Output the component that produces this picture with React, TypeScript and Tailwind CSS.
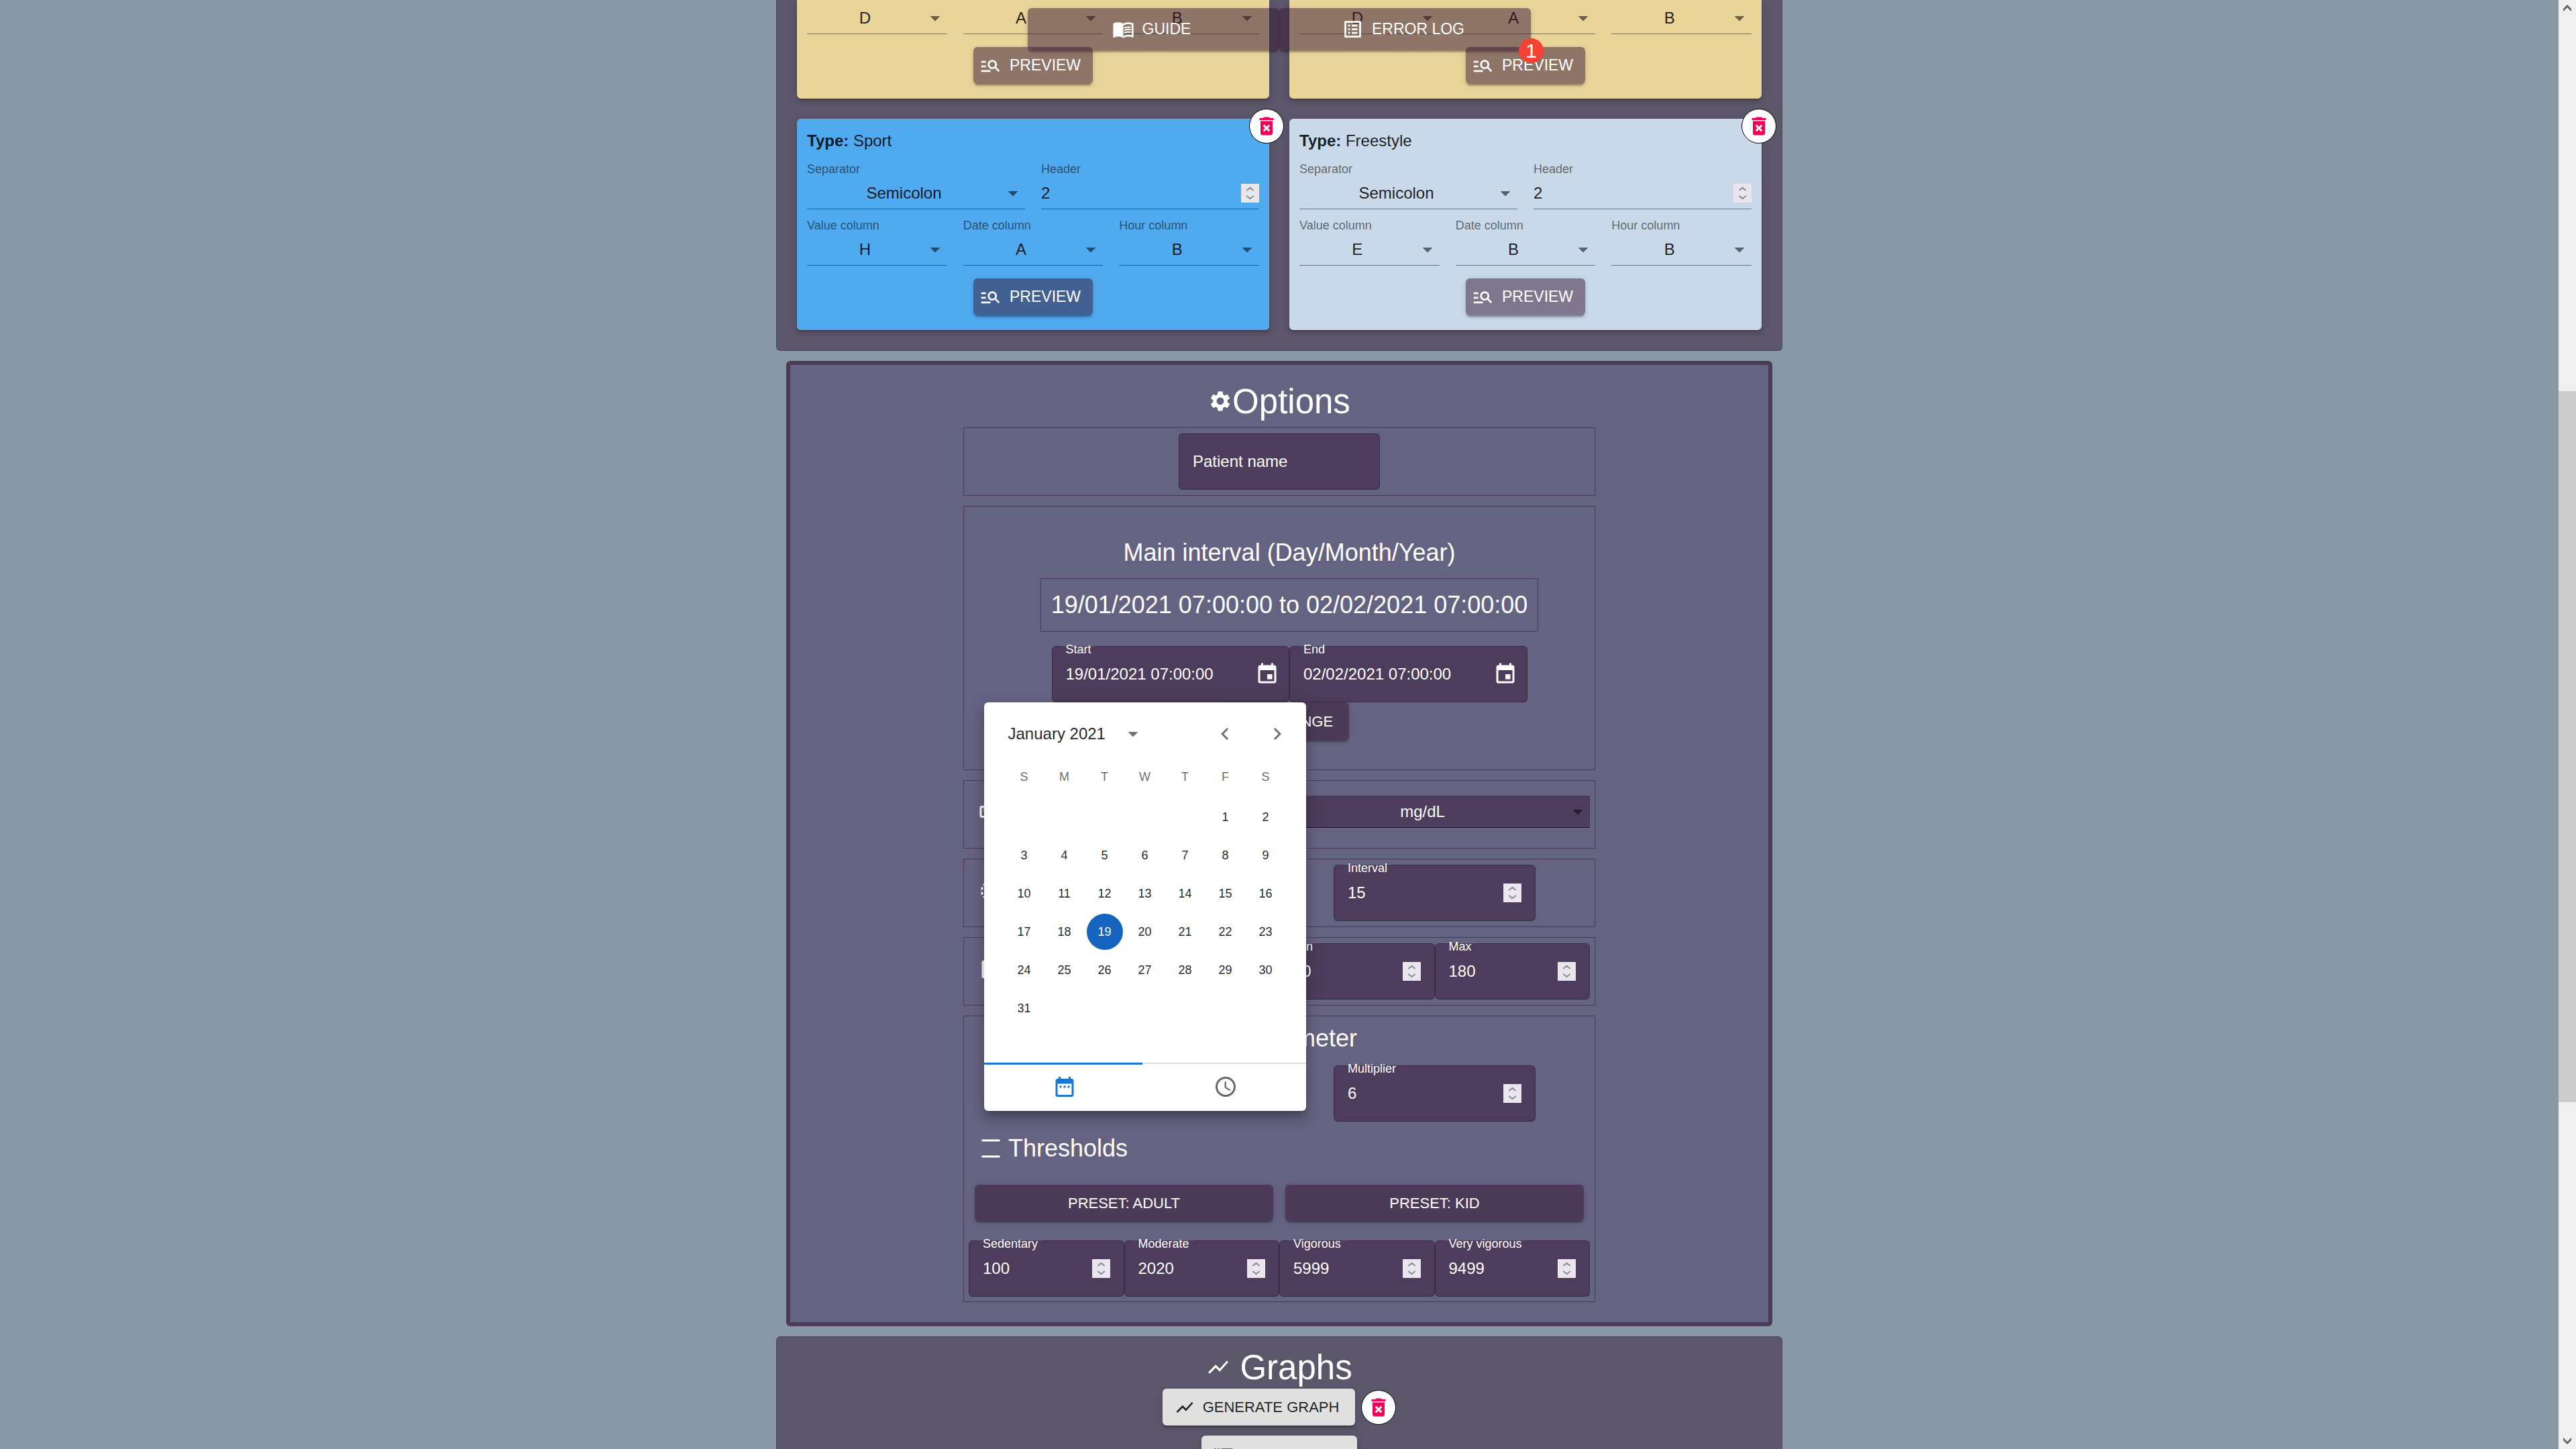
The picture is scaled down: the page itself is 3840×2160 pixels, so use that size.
import { useId, type ReactNode } from "react";
import {
  MdArrowDropDown,
  MdBurstMode,
  MdChevronLeft,
  MdChevronRight,
  MdDateRange,
  MdDeleteForever,
  MdEvent,
  MdHistoryToggleOff,
  MdListAlt,
  MdManageSearch,
  MdMenuBook,
  MdSchedule,
  MdSettings,
  MdShowChart,
  MdStraighten,
} from "react-icons/md";

const RAISED =
  "shadow-[0_5px_2px_-3px_rgba(0,0,0,0.2),0_3px_3px_0_rgba(0,0,0,0.14),0_2px_8px_0_rgba(0,0,0,0.12)]";

/* ---------- shared controls ---------- */

function Spinner({ label }: { label: string }) {
  return (
    <span className="flex h-7 w-[27px] shrink-0 flex-col bg-[#e9e7ed] text-[#8f8f9d]">
      <button type="button" aria-label={`Increase ${label}`} className="flex flex-1 items-end justify-center pb-[3px]">
        <svg width="13" height="7" viewBox="0 0 13 7" fill="none" stroke="currentColor" strokeWidth="2.2" strokeLinecap="round">
          <path d="M2 5.5 6.5 2 11 5.5" />
        </svg>
      </button>
      <button type="button" aria-label={`Decrease ${label}`} className="flex flex-1 items-start justify-center pt-[3px]">
        <svg width="13" height="7" viewBox="0 0 13 7" fill="none" stroke="currentColor" strokeWidth="2.2" strokeLinecap="round">
          <path d="M2 1.5 6.5 5 11 1.5" />
        </svg>
      </button>
    </span>
  );
}

function LineSelect({ id, label, value, options, dark }: { id?: string; label?: string; value: string; options: string[]; dark?: boolean }) {
  return (
    <div
      className={
        dark
          ? "relative border-b border-black/60 bg-[rgba(53,22,52,0.5)] text-white"
          : "relative border-b border-black/45 text-black/87"
      }
    >
      <select
        id={id}
        aria-label={label}
        defaultValue={value}
        className="block h-[47px] w-full appearance-none bg-transparent pr-9 pt-px text-2xl leading-[28px] [text-align-last:center]"
      >
        {options.map((o) => (
          <option key={o} value={o}>
            {o}
          </option>
        ))}
      </select>
      <MdArrowDropDown className="pointer-events-none absolute top-[6px] right-0 size-9 text-black/55" />
    </div>
  );
}

const COLUMNS = ["A", "B", "C", "D", "E", "F", "G", "H"];

function CardField({ label, children }: { label: string; children: (id: string) => ReactNode }) {
  const id = useId();
  return (
    <div className="min-w-0 flex-1">
      <label htmlFor={id} className="block text-lg leading-6 text-black/55">
        {label}
      </label>
      {children(id)}
    </div>
  );
}

function PreviewButton() {
  return (
    <button
      type="button"
      className={`mx-auto mt-[19px] flex h-[55px] w-[178px] items-center gap-3 rounded-md bg-[rgba(53,22,52,0.5)] pl-[9px] text-[23px] text-white ${RAISED}`}
    >
      <MdManageSearch className="size-[33px]" />
      PREVIEW
    </button>
  );
}

function DeleteButton({ label }: { label: string }) {
  return (
    <button
      type="button"
      aria-label={label}
      className="flex size-[52px] shrink-0 items-center justify-center rounded-full border border-black bg-white text-[#f50057]"
    >
      <MdDeleteForever className="size-9" />
    </button>
  );
}

const CARD_SHADOW =
  "shadow-[0_3px_2px_-2px_rgba(0,0,0,0.2),0_4px_5px_0_rgba(0,0,0,0.14),0_2px_12px_0_rgba(0,0,0,0.12)]";

function SensorCard({ type, color, columns }: { type: string; color: string; columns: [string, string, string] }) {
  return (
    <article className={`relative rounded-md px-[15px] pt-[15px] pb-[22px] ${color} ${CARD_SHADOW}`}>
      <div className="absolute -top-[15px] -right-[22px]">
        <DeleteButton label={`Delete ${type}`} />
      </div>
      <p className="text-2xl leading-9 text-black/87">
        <b>Type:</b> {type}
      </p>
      <div className="mt-3 flex gap-6">
        <CardField label="Separator">
          {(id) => <LineSelect id={id} value="Semicolon" options={["Semicolon", "Comma", "Tab"]} />}
        </CardField>
        <CardField label="Header">
          {(id) => (
            <div className="flex h-12 items-center border-b border-black/45 pt-px">
              <input
                id={id}
                type="number"
                defaultValue={2}
                className="min-w-0 flex-1 [appearance:textfield] bg-transparent text-2xl leading-[28px] text-black/87 [&::-webkit-inner-spin-button]:appearance-none"
              />
              <Spinner label="Header" />
            </div>
          )}
        </CardField>
      </div>
      <div className="mt-3 flex gap-6">
        {["Value column", "Date column", "Hour column"].map((label, i) => (
          <CardField key={label} label={label}>
            {(id) => <LineSelect id={id} value={columns[i]} options={COLUMNS} />}
          </CardField>
        ))}
      </div>
      <PreviewButton />
    </article>
  );
}

/* Card whose upper rows are scrolled out above the window. */
function ScrolledCard() {
  return (
    <article className={`rounded-b-md bg-[#e9d59a] px-[15px] pt-[3px] pb-[22px] ${CARD_SHADOW}`}>
      <div className="grid grid-cols-3 gap-6">
        <LineSelect label="Value column" value="D" options={COLUMNS} />
        <LineSelect label="Date column" value="A" options={COLUMNS} />
        <LineSelect label="Hour column" value="B" options={COLUMNS} />
      </div>
      <PreviewButton />
    </article>
  );
}

/* ---------- option panel ---------- */

function OutlinedField({ label, value, type, action }: { label: string; value: string; type: "number" | "text"; action?: ReactNode }) {
  const id = useId();
  return (
    <fieldset className="-mt-[13px] h-[97px] min-w-0 rounded-md border border-black/25 bg-[rgba(53,22,52,0.5)] text-white">
      <legend className="ml-3 px-2 pt-[9px] text-lg leading-[18px]">
        <label htmlFor={id}>{label}</label>
      </legend>
      <div className={action ? "flex h-[57px] items-center pr-3.5 pb-px pl-5" : "flex h-[57px] items-center px-5 pb-px"}>
        <input
          id={id}
          type={type}
          defaultValue={value}
          className="min-w-0 flex-1 [appearance:textfield] bg-transparent text-2xl leading-[28px] [&::-webkit-inner-spin-button]:appearance-none"
        />
        {action ?? <Spinner label={label} />}
      </div>
    </fieldset>
  );
}

function Section({ children, className }: { children: ReactNode; className: string }) {
  return <section className={`border border-[#4c3b58] ${className}`}>{children}</section>;
}

function PresetButton({ children }: { children: ReactNode }) {
  return (
    <button type="button" className={`h-[54px] rounded-md bg-[#4c3b58] text-[22px] text-white ${RAISED}`}>
      {children}
    </button>
  );
}

function Calendar() {
  const blanks = 5;
  return (
    <div
      role="dialog"
      aria-label="Choose start date"
      className="absolute top-[84px] -left-[101px] z-10 w-[480px] rounded-md bg-white text-black/87 shadow-[0_8px_8px_-5px_rgba(0,0,0,0.2),0_12px_15px_2px_rgba(0,0,0,0.14),0_5px_21px_3px_rgba(0,0,0,0.12)]"
    >
      <div className="flex items-center pt-[26px] pr-[25px] pl-9">
        <button type="button" className="flex w-[204px] items-center justify-between text-2xl leading-[42px]">
          January 2021
          <MdArrowDropDown className="size-9 text-black/55" />
        </button>
        <button type="button" aria-label="Previous month" className="ml-auto">
          <MdChevronLeft className="size-9 text-black/55" />
        </button>
        <button type="button" aria-label="Next month" className="ml-[42px]">
          <MdChevronRight className="size-9 text-black/55" />
        </button>
      </div>
      <div className="mt-[13px] grid grid-cols-7 px-[30px] text-center text-lg leading-[60px] text-black/60">
        {["S", "M", "T", "W", "T", "F", "S"].map((d, i) => (
          <span key={i}>{d}</span>
        ))}
      </div>
      <div className="grid h-[396px] grid-cols-7 content-start gap-y-[3px] px-[30px] pt-[3px]">
        {Array.from({ length: blanks }, (_, i) => (
          <span key={`b${i}`} />
        ))}
        {Array.from({ length: 31 }, (_, i) => i + 1).map((day) => (
          <button
            key={day}
            type="button"
            className={
              day === 19
                ? "mx-auto size-[54px] rounded-full bg-[#1565c0] text-lg text-white"
                : "mx-auto size-[54px] rounded-full text-lg"
            }
          >
            {day}
          </button>
        ))}
      </div>
      <div className="relative grid grid-cols-2 border-t-2 border-[#dfdfdf]">
        <span className="absolute -top-[2px] left-0 h-[3px] w-[236px] bg-[#1976d2]" />
        <button type="button" aria-label="Date" className="flex h-[70px] items-center justify-center pb-[3px] text-[#1976d2]">
          <MdDateRange className="size-9" />
        </button>
        <button type="button" aria-label="Time" className="flex h-[70px] items-center justify-center pb-[3px] text-black/60">
          <MdSchedule className="size-9" />
        </button>
      </div>
    </div>
  );
}

function DateAction({ label }: { label: string }) {
  return (
    <button type="button" aria-label={label}>
      <MdEvent className="size-9" />
    </button>
  );
}

function OptionsPanel() {
  return (
    <div className="mt-[15px] w-full max-w-[1470px] rounded-md border-6 border-[#4c3b58] bg-[#656382] pt-[23px] pb-[30px] text-white">
      <h2 className="mb-[7px] text-center text-[51px] leading-[63px]">
        <MdSettings className="inline size-9 align-baseline" />
        Options
      </h2>
      <div className="mx-auto flex max-w-[942px] flex-col gap-[15px]">
        <Section className="flex justify-center py-2">
          <input
            type="text"
            aria-label="Patient name"
            placeholder="Patient name"
            className="h-[84px] w-[300px] rounded-md border border-black/25 bg-[rgba(53,22,52,0.5)] px-5 text-2xl placeholder:text-white"
          />
        </Section>

        <Section className="flex flex-col items-center pt-[45px] pb-11 pl-[30px]">
          <h3 className="text-4xl leading-[48px]">Main interval (Day/Month/Year)</h3>
          <p className="mt-3.5 border border-[#4c3b58] p-[15px] text-4xl leading-[48px]">
            19/01/2021 07:00:00 to 02/02/2021 07:00:00
          </p>
          <div className="mt-[21px] grid w-[709px] grid-cols-2">
            <div className="relative">
              <OutlinedField label="Start" type="text" value="19/01/2021 07:00:00" action={<DateAction label="Choose start date" />} />
              <Calendar />
            </div>
            <OutlinedField label="End" type="text" value="02/02/2021 07:00:00" action={<DateAction label="Choose end date" />} />
          </div>
          <button type="button" className={`flex h-14 items-center gap-3 rounded-md bg-[#4c3b58] pr-6 pl-[18px] text-[22px] ${RAISED}`}>
            <MdEvent className="size-[30px]" />
            CHANGE
          </button>
        </Section>

        <Section className="grid grid-cols-2 px-[7px] pt-[22px] pb-[30px]">
          <MdStraighten className="mt-[6px] ml-[15px] size-9" />
          <LineSelect dark label="Glucose unit" value="mg/dL" options={["mg/dL", "mmol/L"]} />
        </Section>

        <Section className="grid grid-cols-2 px-[7px] py-2">
          <MdHistoryToggleOff className="mt-[21px] ml-[15px] size-9" />
          <div className="mx-auto w-[301px]">
            <OutlinedField label="Interval" type="number" value="15" />
          </div>
        </Section>

        <Section className="grid grid-cols-4 px-[7px] py-2">
          <svg viewBox="0 0 24 24" fill="currentColor" className="col-span-2 mt-[21px] ml-[15px] size-9">
            <path d="M5 3h14a2 2 0 0 1 2 2v14a2 2 0 0 1-2 2H5a2 2 0 0 1-2-2V5c0-1.1.9-2 2-2z" />
          </svg>
          <OutlinedField label="Min" type="number" value="70" />
          <OutlinedField label="Max" type="number" value="180" />
        </Section>

        <Section className="px-[7px] pt-[9px] pb-[7px]">
          <h3 className="text-center text-4xl leading-[48px]">Accelerometer</h3>
          <div className="mt-4 grid grid-cols-2">
            <div className="col-start-2 mx-auto w-[301px]">
              <OutlinedField label="Multiplier" type="number" value="6" />
            </div>
          </div>
          <h3 className="mt-4 ml-[15px] flex items-center gap-2 text-4xl leading-[48px]">
            <svg viewBox="0 0 24 24" fill="currentColor" className="size-9">
              <path d="M3 3h18v2H3zm0 16h18v2H3z" />
            </svg>
            Thresholds
          </h3>
          <div className="mt-[30px] grid grid-cols-2 gap-[18px] px-[9px]">
            <PresetButton>PRESET: ADULT</PresetButton>
            <PresetButton>PRESET: KID</PresetButton>
          </div>
          <div className="mt-[29px] grid grid-cols-4">
            <OutlinedField label="Sedentary" type="number" value="100" />
            <OutlinedField label="Moderate" type="number" value="2020" />
            <OutlinedField label="Vigorous" type="number" value="5999" />
            <OutlinedField label="Very vigorous" type="number" value="9499" />
          </div>
        </Section>
      </div>
    </div>
  );
}

/* ---------- page ---------- */

function Toolbar() {
  const button = `flex h-[63px] flex-1 items-center justify-center gap-3 rounded-md bg-[rgba(53,22,52,0.5)] pr-[6px] text-[23px] text-white ${RAISED}`;
  return (
    <nav aria-label="Help" className="absolute top-3 left-1/2 z-20 flex w-[750px] -translate-x-1/2">
      <button type="button" className={button}>
        <MdMenuBook className="size-[33px]" />
        GUIDE
      </button>
      <button type="button" className={button}>
        <MdListAlt className="size-[33px]" />
        ERROR LOG
      </button>
      <span className="absolute top-[45px] -right-[19px] flex h-[37px] min-w-[37px] items-center justify-center rounded-full bg-[#f44336] text-3xl text-white">
        1
      </span>
    </nav>
  );
}

function ScrollBar() {
  return (
    <div aria-hidden="true" className="flex w-[26px] shrink-0 flex-col items-center bg-[#f0f0f0] text-[#606060]">
      <svg width="14" height="10" viewBox="0 0 14 10" className="mt-[7px] mb-[566px] shrink-0" fill="currentColor">
        <path d="M7 0 13 6V10L7 4 1 10V6z" />
      </svg>
      <div className="h-[1060px] w-full bg-[#cdcdcd]" />
      <svg width="14" height="10" viewBox="0 0 14 10" className="mt-auto mb-[7px] shrink-0" fill="currentColor">
        <path d="M7 10 1 4V0L7 6 13 0V4z" />
      </svg>
    </div>
  );
}

const PANEL = "w-full max-w-[1500px] border border-[#4e4660] bg-[#5c566b]";

export default function App() {
  return (
    <div className='flex h-screen overflow-hidden bg-[#8799a6] font-["Liberation_Sans",Arial,sans-serif]'>
      <main className="relative flex min-w-0 flex-1 flex-col items-center overflow-hidden">
        <Toolbar />
        <div className={`${PANEL} shrink-0 grid grid-cols-2 gap-[30px] rounded-b-md border-t-0 px-[30px] pb-[30px]`}>
          <ScrolledCard />
          <ScrolledCard />
          <SensorCard type="Sport" color="bg-[#50aaf0]" columns={["H", "A", "B"]} />
          <SensorCard type="Freestyle" color="bg-[#c9d9e9]" columns={["E", "B", "B"]} />
        </div>
        <OptionsPanel />
        <div className={`${PANEL} mt-[15px] flex shrink-0 flex-col items-center rounded-md pt-3.5 pb-10`}>
          <h2 className="text-[51px] leading-[63px] text-white">
            <MdShowChart className="inline size-9 align-baseline" /> Graphs
          </h2>
          <div className="flex items-center gap-[9px]">
            <button
              type="button"
              className={`flex h-[55px] items-center gap-3 rounded-md bg-[#e0e0e0] pr-6 pl-[18px] text-[22px] text-black/87 ${RAISED}`}
            >
              <MdShowChart className="size-[30px]" />
              GENERATE GRAPH
            </button>
            <DeleteButton label="Delete graph" />
          </div>
          <button
            type="button"
            aria-label="Export images"
            className={`mt-[15px] flex h-[55px] w-[232px] shrink-0 items-center rounded-md bg-[#e0e0e0] pl-[18px] text-black/70 ${RAISED}`}
          >
            <MdBurstMode className="size-[30px]" />
          </button>
        </div>
      </main>
      <ScrollBar />
    </div>
  );
}
